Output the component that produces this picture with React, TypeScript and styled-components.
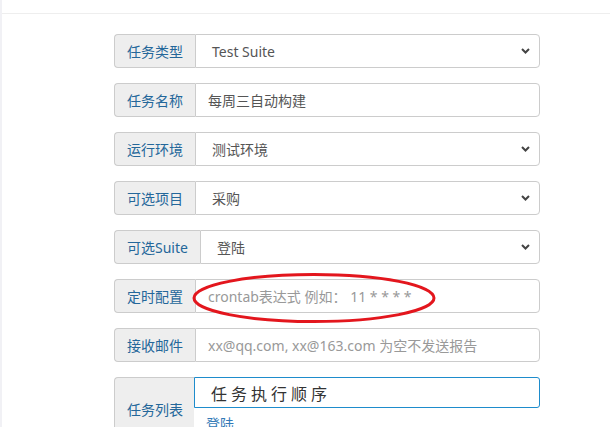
import React from "react";
import styled, { createGlobalStyle } from "styled-components";

const GlobalStyle = createGlobalStyle`
  html, body { margin: 0; padding: 0; background: #fff; }
  body {
    font-family: "Noto Sans", "Noto Sans CJK SC", sans-serif;
    font-size: 14px;
    color: #333;
    overflow: hidden;
  }
  * { box-sizing: border-box; }
`;

const Page = styled.div`
  min-height: 427px;
  border-left: 2px solid #f1f1f5;
`;

const TopBar = styled.div`
  height: 14px;
  border-bottom: 1px solid #eeeeee;
`;

const Form = styled.form`
  position: relative;
  width: 426px;
  margin-left: 112px;
  padding-top: 20px;
`;

const Group = styled.div<{ $tall?: boolean }>`
  display: flex;
  height: ${(p) => (p.$tall ? "80px" : "34px")};
  margin-bottom: 15px;
`;

const Addon = styled.span<{ $tall?: boolean }>`
  display: flex;
  align-items: center;
  justify-content: center;
  flex: none;
  padding: ${(p) => (p.$tall ? "0 11px 16px 12px" : "0 12px")};
  height: 100%;
  background: #eeeeee;
  border: 1px solid #cccccc;
  border-right: 0;
  border-radius: 4px 0 0 4px;
  color: #24679a;
  font-size: 14px;
  white-space: nowrap;
`;

const Field = styled.div`
  flex: 1;
  display: flex;
  align-items: center;
  height: 100%;
  padding: 0 12px;
  border: 1px solid #cccccc;
  border-radius: 0 4px 4px 0;
  background: #fff;
  color: #555;
  font-size: 14px;
`;

const SelectValue = styled.span`
  flex: 1;
  padding-left: 4px;
`;

const Placeholder = styled.span`
  color: #999;
`;

const Chevron = styled.svg`
  width: 9px;
  height: 6px;
  margin-right: -3px;
`;

const TaskColumn = styled.div`
  flex: 1;
  display: flex;
  flex-direction: column;
`;

const OrderInput = styled.div`
  height: 31px;
  display: flex;
  align-items: center;
  padding: 0 12px 0 16px;
  border: 1px solid #1e8ccc;
  border-radius: 0 3px 3px 0;
  color: #333;
  font-size: 16px;
  letter-spacing: 4px;
`;

const TaskLink = styled.a`
  margin: 5px 0 0 12px;
  color: #337ab7;
  font-size: 14px;
  text-decoration: none;
`;

const Annotation = styled.svg`
  position: absolute;
  left: 77px;
  top: 258px;
  width: 246px;
  height: 52px;
  pointer-events: none;
`;

const Arrow = () => (
  <Chevron viewBox="0 0 9 6">
    <path d="M1 1 L4.5 4.5 L8 1" fill="none" stroke="#444" strokeWidth="2" />
  </Chevron>
);

const topSelects = [{ label: "任务类型", value: "Test Suite" }];
const midSelects = [
  { label: "运行环境", value: "测试环境" },
  { label: "可选项目", value: "采购" },
  { label: "可选Suite", value: "登陆" },
];

function SelectRow({ label, value }: { label: string; value: string }) {
  return (
    <Group>
      <Addon>{label}</Addon>
      <Field>
        <SelectValue>{value}</SelectValue>
        <Arrow />
      </Field>
    </Group>
  );
}

export default function App() {
  return (
    <>
      <GlobalStyle />
      <Page>
        <TopBar />
        <Form>
          {topSelects.map((s) => (
            <SelectRow key={s.label} {...s} />
          ))}
          <Group>
            <Addon>任务名称</Addon>
            <Field>每周三自动构建</Field>
          </Group>
          {midSelects.map((s) => (
            <SelectRow key={s.label} {...s} />
          ))}
          <Group>
            <Addon>定时配置</Addon>
            <Field>
              <Placeholder>crontab表达式 例如： 11 * * * *</Placeholder>
            </Field>
          </Group>
          <Group>
            <Addon>接收邮件</Addon>
            <Field>
              <Placeholder>xx@qq.com, xx@163.com 为空不发送报告</Placeholder>
            </Field>
          </Group>
          <Group $tall>
            <Addon $tall>任务列表</Addon>
            <TaskColumn>
              <OrderInput>任务执行顺序</OrderInput>
              <TaskLink href="#">登陆</TaskLink>
            </TaskColumn>
          </Group>
          <Annotation viewBox="0 0 246 52">
            <ellipse cx="123" cy="26" rx="120" ry="23.5" fill="none" stroke="#e3161d" strokeWidth="3" />
          </Annotation>
        </Form>
      </Page>
    </>
  );
}
